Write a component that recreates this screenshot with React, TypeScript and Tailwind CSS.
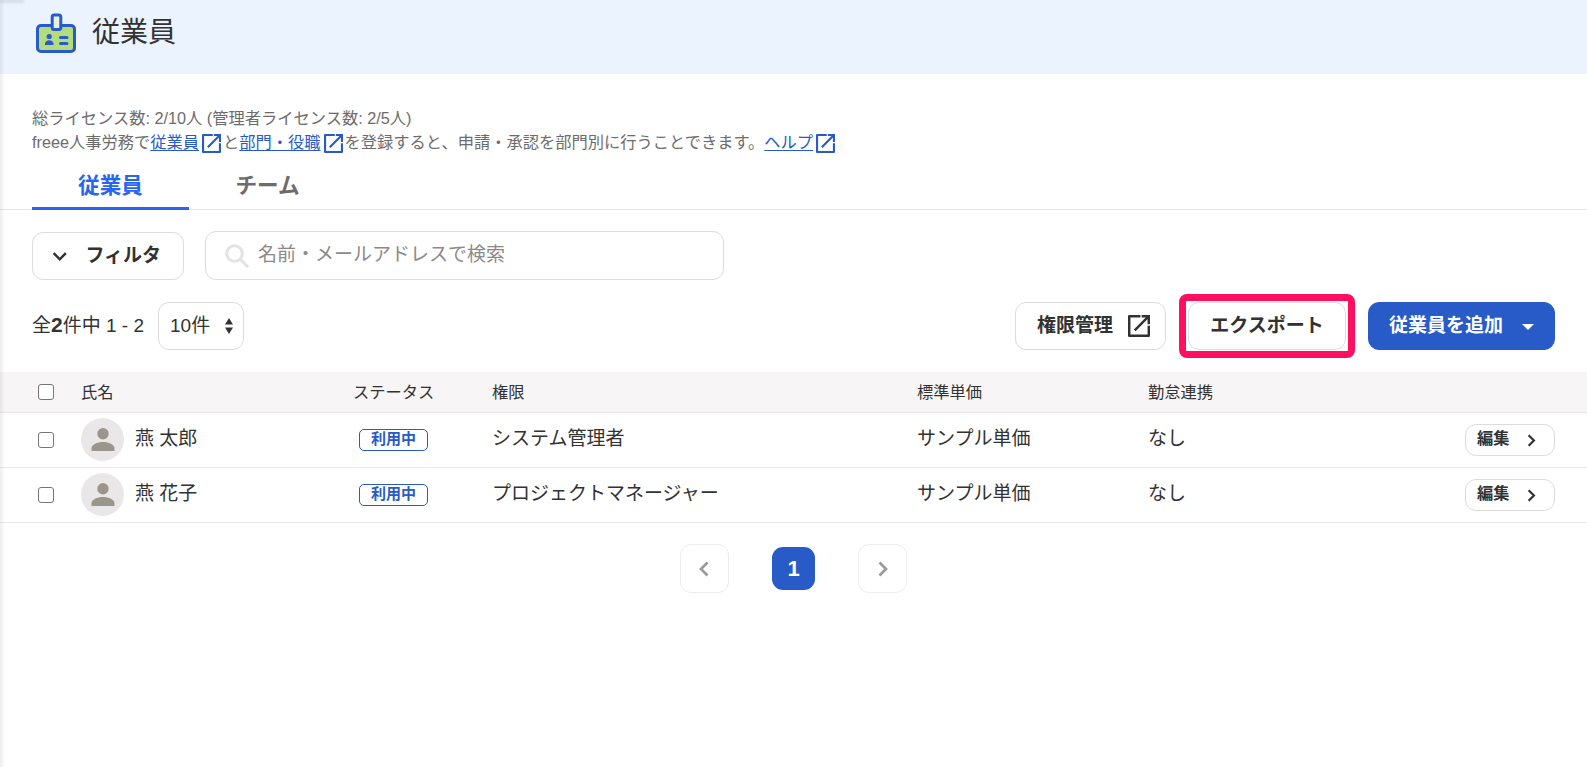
import clsx from "clsx";
import type { ReactNode } from "react";

type Employee = { name: string; role: string; price: string; attendance: string };

const employees: Employee[] = [
  { name: "燕 太郎", role: "システム管理者", price: "サンプル単価", attendance: "なし" },
  { name: "燕 花子", role: "プロジェクトマネージャー", price: "サンプル単価", attendance: "なし" },
];

const columns = "grid grid-cols-[81px_272px_139px_425px_231px_1fr] items-center";

const BadgeIcon = () => (
  <svg className="h-10 w-10" viewBox="0 0 40 40" fill="none">
    <rect x="1.5" y="12.5" width="37" height="26" rx="3.5" fill="#b4dc7d" stroke="#285ac8" strokeWidth="3" />
    <rect x="16.2" y="2" width="8.6" height="14.5" rx="2" fill="#e6f3d8" stroke="#285ac8" strokeWidth="3" />
    <circle cx="13.2" cy="23.5" r="2.6" fill="#285ac8" />
    <path d="M9 32v-1.300c0-2.200 2-3.400 4.200-3.400s4.300 1.200 4.300 3.400V32z" fill="#285ac8" />
    <path d="M24.500 24.500h6.500M24.500 30.500h6.500" stroke="#285ac8" strokeWidth="3" strokeLinecap="round" />
  </svg>
);

const ExternalIcon = ({ className }: { className?: string }) => (
  <svg className={className} viewBox="0 0 18 18" fill="none" stroke="currentColor" strokeWidth="2">
    <path d="M10.200 1H1v16h16V8.800" strokeLinejoin="round" />
    <path d="M11.200 1H17v6.500M17 1L5.500 12.500" />
  </svg>
);

const Chevron = ({ className }: { className?: string }) => (
  <svg className={className} viewBox="0 0 10 16" fill="none" stroke="currentColor" strokeWidth="2.700">
    <path d="M1.500 1.500L8 8l-6.500 6.500" />
  </svg>
);

const Checkbox = () => (
  <span className="ml-[38px] block size-4 rounded-[3px] border-[1.5px] border-[#767676] bg-white" />
);

const Link = ({ children }: { children: ReactNode }) => (
  <a className="inline-flex h-6 text-[#285ac8]">
    <span className="underline underline-offset-2">{children}</span>
    <ExternalIcon className="mt-[4px] mr-[2px] ml-[3px] size-[19px]" />
  </a>
);

const Button = ({ className, children }: { className?: string; children: ReactNode }) => (
  <button
    className={clsx(
      "flex h-12 items-center rounded-[11px] border font-bold text-[19px]",
      className ?? "border-[#dcdcdc] bg-white",
    )}
  >
    {children}
  </button>
);

const EmployeeRow = ({ employee }: { employee: Employee }) => (
  <div className={clsx(columns, "h-[55px] border-[#e9e7e7] border-b text-[19px]")}>
    <Checkbox />
    <div className="-mt-px flex items-center">
      <span className="grid size-[43px] place-items-center rounded-full bg-[#e9e7e7]">
        <svg className="h-[23px] w-6" viewBox="0 0 24 23" fill="#9b968c">
          <circle cx="12" cy="5.700" r="5.700" />
          <path d="M0.500 23v-2.500c0-4 5.700-6.500 11.500-6.500s11.500 2.500 11.500 6.500V23z" />
        </svg>
      </span>
      <span className="-mt-px ml-[11px]">{employee.name}</span>
    </div>
    <div>
      <span className="ml-1.5 flex h-[22px] w-[69px] justify-center rounded-[5px] border border-[#285ac8] font-bold text-[#285ac8] text-[15px] leading-[17px]">
        利用中
      </span>
    </div>
    <span className="-mt-0.5">{employee.role}</span>
    <span className="-mt-0.5">{employee.price}</span>
    <div className="flex items-center justify-between pr-8">
      <span className="-mt-0.5">{employee.attendance}</span>
      <button className="flex h-8 w-[90px] items-center rounded-[11px] border border-[#dcdcdc] bg-white pl-[11px] font-bold text-[16.25px]">
        <span className="-mt-[3px]">編集</span>
        <Chevron className="ml-[17px] h-[13px] w-[9px]" />
      </button>
    </div>
  </div>
);

export default function App() {
  return (
    <div className="relative h-[767px] w-full overflow-hidden bg-white font-['Liberation_Sans','Noto_Sans_CJK_JP',sans-serif] text-[#323232]">
      <header className="flex h-[74px] bg-[#ebf3ff] pl-9">
        <div className="pt-[13px]">
          <BadgeIcon />
        </div>
        <h1 className="ml-4 text-[28px] leading-[66px]">従業員</h1>
      </header>

      <div className="mt-[32px] pl-8 text-[#6e6b6b] text-[16.25px] leading-6">
        <p>総ライセンス数: 2/10人 (管理者ライセンス数: 2/5人)</p>
        <p className="flex">
          freee人事労務で<Link>従業員</Link>と<Link>部門・役職</Link>
          を登録すると、申請・承認を部門別に行うことできます。
          <Link>ヘルプ</Link>
        </p>
      </div>

      <nav className="mt-[10px] flex h-[46px] border-[#e9e7e7] border-b pl-8 font-bold text-[21.6px] leading-[43px]">
        <a className="h-[46px] w-[157px] border-[#2864f0] border-b-3 text-center text-[#2864f0]">従業員</a>
        <a className="w-[157px] text-center text-[#6e6b6b]">チーム</a>
      </nav>

      <div className="mt-[21px] flex items-end gap-[21px] pl-8">
        <Button className="w-[152px] border-[#dcdcdc] pl-[22px]">
          <Chevron className="h-[15px] w-[9.5px] rotate-90" />
          <span className="mt-px ml-[21px]">フィルタ</span>
        </Button>
        <div className="flex h-[49px] w-[519px] items-center rounded-[11px] border border-[#dcdcdc] pl-[19px] text-[#8c8989] text-[19px]">
          <svg className="size-[24px]" viewBox="0 0 24 24" fill="none" stroke="#e4e2e2" strokeWidth="3">
            <circle cx="9.500" cy="9.500" r="7.800" />
            <path d="M15 15l8 8" />
          </svg>
          <span className="-mt-px ml-[9px]">名前・メールアドレスで検索</span>
        </div>
      </div>

      <div className="mt-[22px] flex h-12 items-center pr-8 pl-8 text-[19px]">
        <p className="-mt-0.5 w-[126px] whitespace-nowrap">
          全<b className="text-[21px]">2</b>件中 1 - 2
        </p>
        <div className="flex h-12 w-[86px] items-center rounded-[11px] border border-[#dcdcdc] pl-[11px]">
          <span className="mt-px">10件</span>
          <svg className="ml-[15px] h-4 w-2" viewBox="0 0 8 16" fill="#323232">
            <path d="M0 6.500L4 0l4 6.500zM0 9.500h8L4 16z" />
          </svg>
        </div>
        <div className="ml-auto flex items-center">
          <Button className="w-[151px] border-[#dcdcdc] pl-[21px]">
            <span className="mt-px">権限管理</span>
            <ExternalIcon className="ml-[15px] size-[22px]" />
          </Button>
          <div className="-my-2 ml-[13px] rounded-lg border-7 border-[#ff0f5f] px-0.5 py-px">
            <Button className="w-[158px] justify-center border-[#dcdcdc]">
              <span className="mt-px">エクスポート</span>
            </Button>
          </div>
          <Button className="ml-[13px] w-[187px] border-[#285ac8] bg-[#285ac8] pl-5 text-white">
            <span className="mt-px">従業員を追加</span>
            <svg className="mt-px ml-[19px] h-[6px] w-3" viewBox="0 0 12 6" fill="currentColor">
              <path d="M0 0h12L6 6z" />
            </svg>
          </Button>
        </div>
      </div>

      <div className={clsx(columns, "mt-[22px] h-[41px] border-[#e9e7e7] border-b bg-[#f7f5f6] text-[16.25px]")}>
        <Checkbox />
        <span>氏名</span>
        <span>ステータス</span>
        <span>権限</span>
        <span>標準単価</span>
        <span>勤怠連携</span>
      </div>
      {employees.map((employee) => (
        <EmployeeRow key={employee.name} employee={employee} />
      ))}

      <div className="mt-[21px] flex items-center justify-center gap-[43px]">
        <button className="grid size-[49px] place-items-center rounded-[11px] border border-[#ededed] text-[#9a9a9a]">
          <Chevron className="mr-px h-4 w-2.5 rotate-180" />
        </button>
        <span className="grid size-[43px] place-items-center rounded-[11px] bg-[#285ac8] font-bold text-[22px] text-white">
          1
        </span>
        <button className="grid size-[49px] place-items-center rounded-[11px] border border-[#ededed] text-[#9a9a9a]">
          <Chevron className="h-4 w-2.5" />
        </button>
      </div>

      <div className="pointer-events-none absolute inset-y-0 left-0 w-[5px] bg-linear-to-r from-black/7 to-transparent" />
      <div className="pointer-events-none absolute top-0 left-0 h-1 w-6 bg-linear-to-b from-black/15 to-transparent blur-[1px]" />
    </div>
  );
}
